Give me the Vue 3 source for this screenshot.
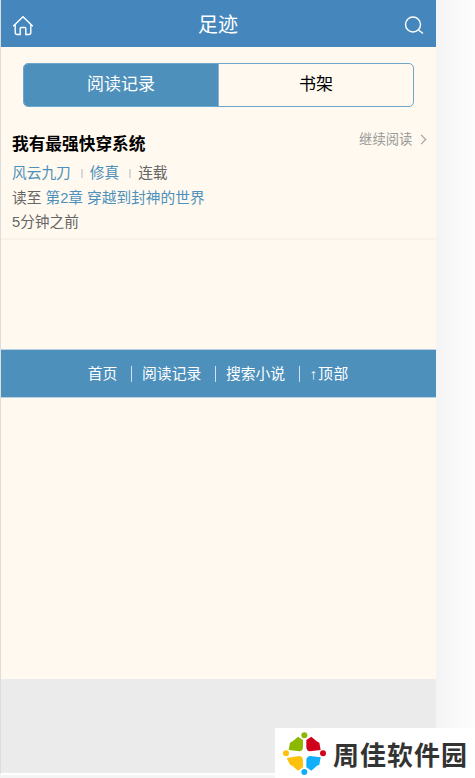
<template>
  <div class="page">
    <div class="phone">
      <header class="topbar">
        <svg class="ico" viewBox="0 0 24 24" width="24" height="24">
          <path d="M2.200 14.300 12 4.700l9.800 9.600M4.200 12.500v8a2 2 0 0 0 2 2H9.200v-6a1 1 0 0 1 1-1h3.600a1 1 0 0 1 1 1v6h3a2 2 0 0 0 2-2v-8" />
        </svg>
        <h1 class="title">足迹</h1>
        <svg class="ico" viewBox="0 0 24 24" width="24" height="24">
          <circle cx="12" cy="12.500" r="7.500" />
          <path d="M17.500 18l4.500 3.500" />
        </svg>
      </header>

      <div class="tabs">
        <div class="tab active">阅读记录</div>
        <div class="tab">书架</div>
      </div>

      <div class="record">
        <div class="record-head">
          <h2 class="book">我有最强快穿系统</h2>
          <span class="continue">继续阅读 <i class="arrow"></i></span>
        </div>
        <p class="line">
          <a class="link">风云九刀</a><span class="sep"></span><a class="link">修真</a><span class="sep"></span>连载
        </p>
        <p class="line">读至 <a class="link">第2章 穿越到封神的世界</a></p>
        <p class="line">5分钟之前</p>
      </div>

      <nav class="footer-nav">
        <a v-for="item in links" :key="item">{{ item }}</a>
      </nav>

      <div class="fill"></div>
      <div class="bottom"></div>
    </div>

    <div class="watermark">
      <svg viewBox="20 15 135 135" width="45" height="45">
        <path fill="#8cb800" d="M83 42 68 32 52 46 44 50 40 72 72 76Q83 74 83 62Z" />
        <path fill="#d0021b" d="M93 42 108 32 124 46 132 50 136 72 104 76Q93 74 93 62Z" />
        <path fill="#fcc00d" d="M83 124 68 134 52 120 44 116 34 96 72 90Q83 92 83 104Z" />
        <path fill="#11aefb" d="M93 124 108 134 124 120 132 116 136 94 104 90Q93 92 93 104Z" />
        <circle cx="87" cy="28" r="9" fill="#8cb800" />
        <circle cx="143" cy="82" r="9" fill="#d0021b" />
        <circle cx="32" cy="82" r="9" fill="#fcc00d" />
        <circle cx="87" cy="138" r="9" fill="#11aefb" />
      </svg>
      <span>周佳软件园</span>
    </div>
  </div>
</template>

<script setup>
const links = ['首页', '阅读记录', '搜索小说', '↑顶部']
</script>

<style>
html,
body {
  margin: 0;
  background: #fafafa;
}
</style>

<style scoped>
.page {
  position: relative;
  width: 475px;
  height: 778px;
  overflow: hidden;
  font-family: "Liberation Sans", "Noto Sans CJK SC", sans-serif;
  background: linear-gradient(90deg, #f4f4f4 436px, #fdfdfd 475px);
}

.phone {
  display: flex;
  flex-direction: column;
  width: 436px;
  height: 775px;
  box-sizing: border-box;
  background: #fff9ef;
  border-left: 1px solid #ddd;
  border-bottom: 2px solid #fff;
}

.topbar {
  display: flex;
  align-items: center;
  justify-content: space-between;
  flex: none;
  height: 47px;
  padding: 0 11px 0 10px;
  box-sizing: border-box;
  background: #4587bc;
  color: #fff;
}

.title {
  margin: 0;
  font-size: 20px;
  font-weight: normal;
}

.ico {
  fill: none;
  stroke: #fff;
  stroke-width: 1.400;
}

.tabs {
  display: flex;
  height: 42px;
  margin: 16px 22px 0 22px;
  border: 1px solid #6fa6cc;
  border-radius: 5px;
  overflow: hidden;
}

.tab {
  flex: 1;
  font-size: 17px;
  line-height: 42px;
  text-align: center;
  color: #000;
}

.tab.active {
  background: #4d90bb;
  color: #fff;
  border-right: 1px solid #8cb5d2;
}

.record {
  height: 109px;
  margin-top: 24px;
  padding: 0 8px 0 11px;
  box-sizing: border-box;
  border-bottom: 2px solid #f8f2e9;
}

.record-head {
  display: flex;
  justify-content: space-between;
  height: 30px;
}

.book {
  margin: 0;
  font-size: 16.700px;
  line-height: 28px;
  color: #000;
}

.continue {
  font-size: 13.300px;
  line-height: 18px;
  color: #999;
}

.arrow {
  display: inline-block;
  width: 6px;
  height: 6px;
  margin: 0 3px 1px 2px;
  border-top: 1px solid #999;
  border-right: 1px solid #999;
  transform: rotate(45deg);
}

.line {
  margin: 0;
  font-size: 14.700px;
  line-height: 24.500px;
  color: #666;
}

.link {
  color: #4d90bb;
}

.sep {
  display: inline-block;
  width: 2px;
  height: 9px;
  margin: 0 7px 0 10px;
  background: #d8d8d8;
}

.footer-nav {
  display: flex;
  align-items: center;
  justify-content: center;
  flex: none;
  height: 49px;
  margin-top: 109px;
  box-sizing: border-box;
  background: #4d90bb;
  border-top: 1px solid #b9d2e2;
  border-bottom: 1px solid #b9d2e2;
  color: #fff;
  font-size: 14.800px;
}

.footer-nav a {
  line-height: 16px;
}

.footer-nav a + a {
  margin-left: 13.700px;
  padding-left: 10px;
  border-left: 1px solid #cfe1ee;
}

.footer-nav a:last-child {
  letter-spacing: 0.800px;
}

.fill {
  flex: 1;
}

.bottom {
  flex: none;
  height: 94px;
  background: #ebebeb;
}

.watermark {
  position: absolute;
  right: 0;
  bottom: 0;
  display: flex;
  align-items: center;
  gap: 6px;
  width: 200px;
  height: 50px;
  padding-left: 7px;
  box-sizing: border-box;
  background: #fff;
  color: #333;
  font-size: 26px;
  font-weight: bold;
  letter-spacing: 1px;
}
</style>
